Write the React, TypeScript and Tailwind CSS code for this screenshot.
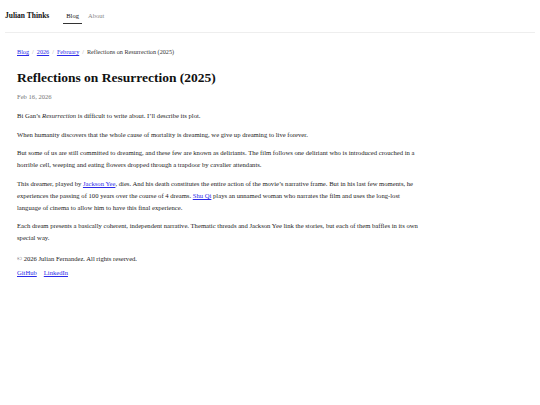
export default function App() {
  return (
    <div className="min-h-screen bg-white text-[#111] [font-family:'Liberation_Serif',serif]">
      <header className="h-[33px] mx-[5px] border-b border-[#eeeeee] flex items-center">
        <span className="text-[7.5px] font-bold">Julian Thinks</span>
        <nav className="ml-[14px] flex items-center gap-[6px] text-[6.5px]">
          <span className="relative px-[3px] py-[3px] text-[#111]">
            Blog
            <span className="absolute left-0 right-0 bottom-0 h-[1px] bg-[#333]" />
          </span>
          <span className="text-[#888]">About</span>
        </nav>
      </header>
      <main className="px-[17px] pt-[14px] max-w-[443px]">
        <div className="text-[6.2px] flex items-center gap-[3px] text-[#333]">
          <a className="text-[#2a2ae8] underline">Blog</a>
          <span className="text-[#aaa]">/</span>
          <a className="text-[#2a2ae8] underline">2026</a>
          <span className="text-[#aaa]">/</span>
          <a className="text-[#2a2ae8] underline">February</a>
          <span className="text-[#aaa]">/</span>
          <span>Reflections on Resurrection (2025)</span>
        </div>
        <h1 className="mt-[13px] text-[13.5px] font-bold leading-[18px]">Reflections on Resurrection (2025)</h1>
        <div className="mt-[6px] text-[6.6px] leading-[8px] text-[#777]">Feb 16, 2026</div>
        <div className="mt-[9px] text-[6.65px] leading-[12px] text-[#222] flex flex-col gap-[6.5px]">
          <p>Bi Gan’s <em>Resurrection</em> is difficult to write about. I’ll describe its plot.</p>
          <p>When humanity discovers that the whole cause of mortality is dreaming, we give up dreaming to live forever.</p>
          <p>But some of us are still committed to dreaming, and these few are known as deliriants. The film follows one deliriant who is introduced crouched in a horrible cell, weeping and eating flowers dropped through a trapdoor by cavalier attendants.</p>
          <p>This dreamer, played by <a className="text-[#2a2ae8] underline">Jackson Yee</a>, dies. And his death constitutes the entire action of the movie’s narrative frame. But in his last few moments, he experiences the passing of 100 years over the course of 4 dreams. <a className="text-[#2a2ae8] underline">Shu Qi</a> plays an unnamed woman who narrates the film and uses the long-lost<br />language of cinema to allow him to have this final experience.</p>
          <p>Each dream presents a basically coherent, independent narrative. Thematic threads and Jackson Yee link the stories, but each of them baffles in its own special way.</p>
        </div>
        <footer className="mt-[11px] text-[6.6px] leading-[8px] text-[#222]">
          <div>© 2026 Julian Fernandez. All rights reserved.</div>
          <div className="mt-[6px] flex gap-[7px]">
            <a className="text-[#2a2ae8] underline">GitHub</a>
            <a className="text-[#2a2ae8] underline">LinkedIn</a>
          </div>
        </footer>
      </main>
    </div>
  );
}
